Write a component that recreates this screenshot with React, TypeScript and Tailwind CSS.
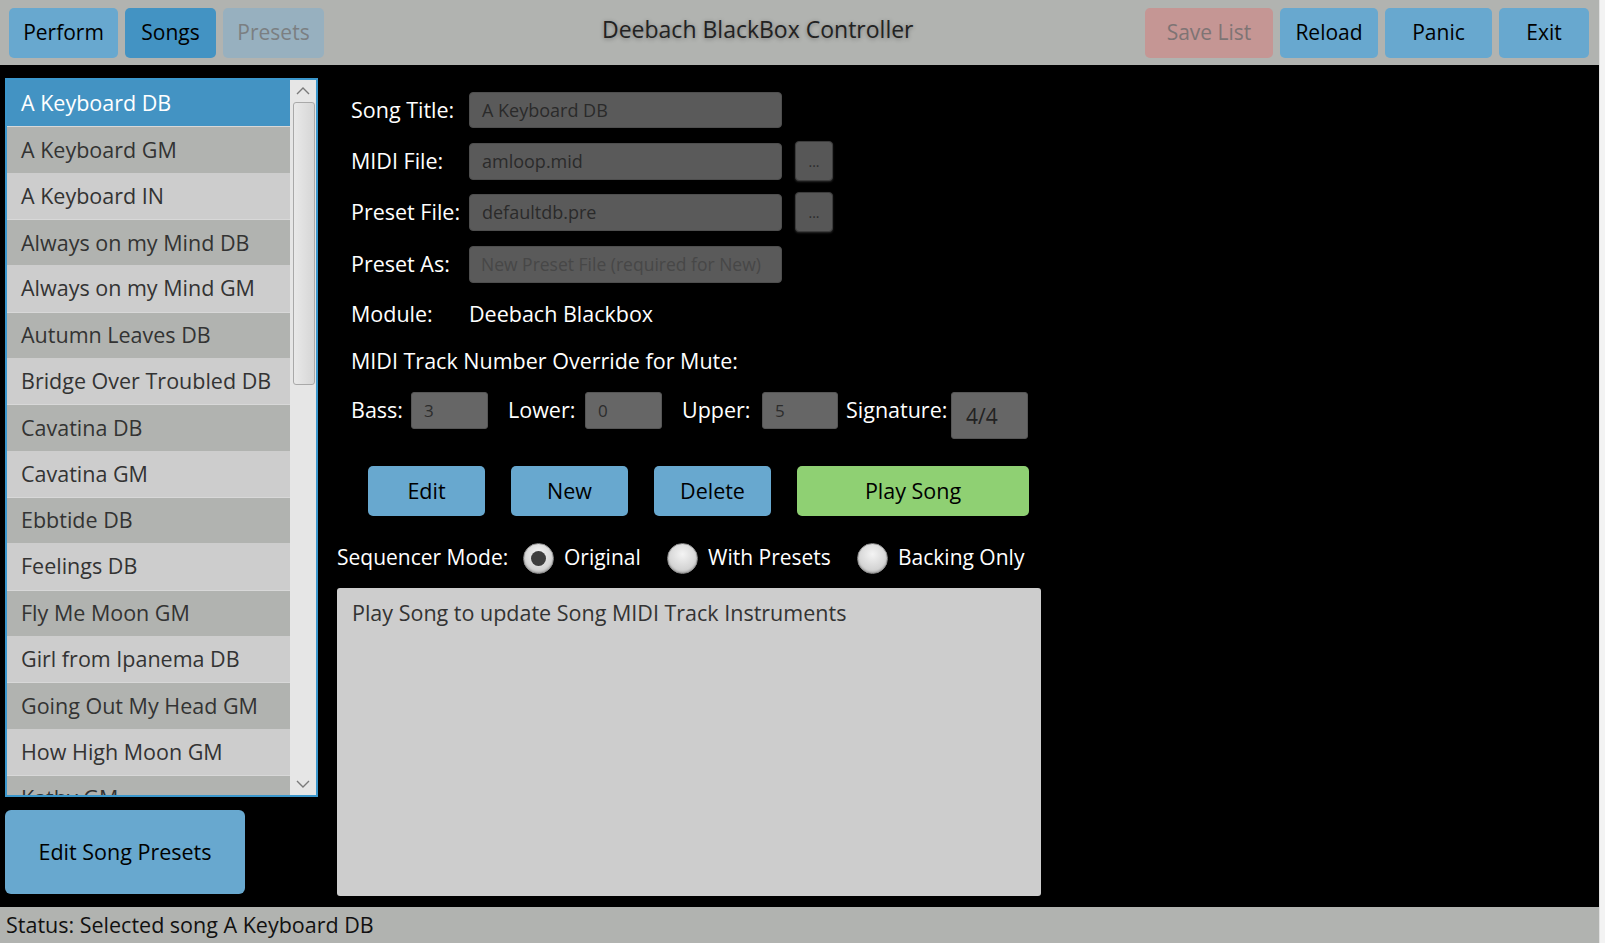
const songs = [
  "A Keyboard DB",
  "A Keyboard GM",
  "A Keyboard IN",
  "Always on my Mind DB",
  "Always on my Mind GM",
  "Autumn Leaves DB",
  "Bridge Over Troubled DB",
  "Cavatina DB",
  "Cavatina GM",
  "Ebbtide DB",
  "Feelings DB",
  "Fly Me Moon GM",
  "Girl from Ipanema DB",
  "Going Out My Head GM",
  "How High Moon GM",
  "Kathy GM",
];

const Radio = ({ checked }: { checked?: boolean }) => (
  <span className="w-[31px] h-[31px] shrink-0 rounded-full border border-[#8c8c8c] bg-[radial-gradient(circle_at_50%_35%,#f4f4f4,#c2c2c2)] shadow-[inset_0_-1px_2px_rgba(0,0,0,0.25)] flex items-center justify-center">
    {checked && <span className="w-[15px] h-[15px] rounded-full bg-[#3e3e3e]" />}
  </span>
);

const TopButton = ({ label, className }: { label: string; className: string }) => (
  <button className={`h-[50px] rounded-[5px] text-[21px] flex items-center justify-center ${className}`}>{label}</button>
);

const App = () => {
  return (
    <div className="flex w-[1605px] h-[943px] overflow-hidden font-['Open_Sans',sans-serif]">
      <div className="w-[1599px] flex flex-col">
        {/* top bar */}
        <div className="h-[65px] bg-[#b1b3b0] flex items-center pl-[9px] pr-[10px]">
          <div className="flex gap-[7px]">
            <TopButton label="Perform" className="w-[109px] bg-[#68a8cf] text-black" />
            <TopButton label="Songs" className="w-[91px] bg-[#4393c3] text-black" />
            <TopButton label="Presets" className="w-[101px] bg-[#97b0bf] text-[#7b7f82]" />
          </div>
          <div className="ml-[278px] pb-[6px] text-[23px] text-[#222] [text-shadow:0_1px_4px_rgba(0,0,0,0.35)]">
            Deebach BlackBox Controller
          </div>
          <div className="ml-auto flex gap-[7px]">
            <TopButton label="Save List" className="w-[128px] bg-[#c59694] text-[#7e7474]" />
            <TopButton label="Reload" className="w-[98px] bg-[#68a8cf] text-black" />
            <TopButton label="Panic" className="w-[107px] bg-[#68a8cf] text-black" />
            <TopButton label="Exit" className="w-[90px] bg-[#68a8cf] text-black" />
          </div>
        </div>

        {/* main */}
        <div className="h-[842px] bg-black flex">
          {/* song list column */}
          <div className="pl-[5px] pt-[13px] w-[318px] flex flex-col">
            <div className="h-[719px] w-[313px] border-2 border-[#3b97cc] flex">
              <div className="w-[283px] overflow-hidden">
                {songs.map((s, i) => (
                  <div
                    key={s}
                    className={`h-[46.33px] flex items-center pl-[14px] text-[21.5px] ${
                      i === 0
                        ? "bg-[#4393c3] text-white"
                        : i % 2 === 1
                        ? "bg-[#b1b3b0] text-[#333] border-t border-[#d8d8d8]"
                        : "bg-[#cdcdcd] text-[#333]"
                    }`}
                  >
                    {s}
                  </div>
                ))}
              </div>
              <div className="w-[26px] bg-[#e6e6e6] flex flex-col">
                <div className="h-[22px] flex items-center justify-center">
                  <svg width="14" height="8" viewBox="0 0 14 8">
                    <polyline points="1,7 7,1 13,7" fill="none" stroke="#7a7a7a" strokeWidth="1.4" />
                  </svg>
                </div>
                <div className="ml-[3px] w-[22px] h-[283px] rounded-[3px] border border-[#a9a9a9] bg-[linear-gradient(to_right,#e9e9e9,#d6d6d6)]" />
                <div className="flex-1" />
                <div className="h-[22px] flex items-center justify-center">
                  <svg width="14" height="8" viewBox="0 0 14 8">
                    <polyline points="1,1 7,7 13,1" fill="none" stroke="#7a7a7a" strokeWidth="1.4" />
                  </svg>
                </div>
              </div>
            </div>
            <button className="mt-[13px] h-[84px] w-[240px] rounded-[6px] bg-[#68a8cf] text-black text-[21.5px]">
              Edit Song Presets
            </button>
          </div>

          {/* form column */}
          <div className="ml-[19px] pt-[26px] flex flex-col text-[21.5px] text-white">
            <div className="pl-[14px] h-[38px] flex items-center">
              <span className="w-[118px]">Song Title:</span>
              <div className="w-[313px] h-[36px] rounded-[4px] bg-[#5a5a5a] border border-[#4e4e4e] flex items-center px-[12px] text-[18px] text-[#2a2a2a]">
                A Keyboard DB
              </div>
            </div>
            <div className="mt-[13px] pl-[14px] h-[38px] flex items-center">
              <span className="w-[118px]">MIDI File:</span>
              <div className="w-[313px] h-[37px] rounded-[4px] bg-[#5a5a5a] border border-[#4e4e4e] flex items-center px-[12px] text-[18px] text-[#2a2a2a]">
                amloop.mid
              </div>
              <button className="ml-[13px] w-[38px] h-[40px] rounded-[4px] bg-[#575757] border border-[#3c3c3c] shadow-[0_1px_2px_rgba(255,255,255,0.15)] text-[#2a2a2a] text-[14px] flex items-end justify-center pb-[8px]">
                ...
              </button>
            </div>
            <div className="mt-[13px] pl-[14px] h-[38px] flex items-center">
              <span className="w-[118px]">Preset File:</span>
              <div className="w-[313px] h-[37px] rounded-[4px] bg-[#5a5a5a] border border-[#4e4e4e] flex items-center px-[12px] text-[18px] text-[#2a2a2a]">
                defaultdb.pre
              </div>
              <button className="ml-[13px] w-[38px] h-[40px] rounded-[4px] bg-[#575757] border border-[#3c3c3c] shadow-[0_1px_2px_rgba(255,255,255,0.15)] text-[#2a2a2a] text-[14px] flex items-end justify-center pb-[8px]">
                ...
              </button>
            </div>
            <div className="mt-[14px] pl-[14px] h-[38px] flex items-center">
              <span className="w-[118px]">Preset As:</span>
              <div className="w-[313px] h-[37px] rounded-[4px] bg-[#5a5a5a] border border-[#4e4e4e] flex items-center px-[11px] text-[17.5px] text-[#474747] whitespace-nowrap overflow-hidden">
                New Preset File (required for New)
              </div>
            </div>
            <div className="mt-[12px] pl-[14px] h-[38px] flex items-center">
              <span className="w-[118px]">Module:</span>
              <span>Deebach Blackbox</span>
            </div>
            <div className="mt-[9px] pl-[14px] h-[38px] flex items-center">MIDI Track Number Override for Mute:</div>
            <div className="mt-[12px] pl-[14px] h-[47px] flex items-start">
              <span className="w-[60px] h-[37px] flex items-center">Bass:</span>
              <div className="w-[77px] h-[37px] rounded-[3px] bg-[#666] border border-[#555] flex items-center px-[12px] text-[17px] text-[#2c2c2c]">3</div>
              <span className="ml-[20px] w-[77px] h-[37px] flex items-center">Lower:</span>
              <div className="w-[77px] h-[37px] rounded-[3px] bg-[#666] border border-[#555] flex items-center px-[12px] text-[17px] text-[#2c2c2c]">0</div>
              <span className="ml-[20px] w-[80px] h-[37px] flex items-center">Upper:</span>
              <div className="w-[76px] h-[37px] rounded-[3px] bg-[#666] border border-[#555] flex items-center px-[12px] text-[17px] text-[#2c2c2c]">5</div>
              <span className="ml-[8px] w-[105px] h-[37px] flex items-center">Signature:</span>
              <div className="w-[77px] h-[47px] rounded-[3px] bg-[#666] border border-[#555] flex items-end pb-[6px] px-[14px] text-[21px] text-[#222]">4/4</div>
            </div>
            <div className="mt-[27px] pl-[31px] h-[50px] flex gap-[26px] text-black">
              <button className="w-[117px] h-[50px] rounded-[5px] bg-[#68a8cf]">Edit</button>
              <button className="w-[117px] h-[50px] rounded-[5px] bg-[#68a8cf]">New</button>
              <button className="w-[117px] h-[50px] rounded-[5px] bg-[#68a8cf]">Delete</button>
              <button className="w-[232px] h-[50px] rounded-[5px] bg-[#8fd073]">Play Song</button>
            </div>
            <div className="mt-[26px] h-[32px] flex items-center whitespace-nowrap text-[21px]">
              <span className="w-[174px] shrink-0">Sequencer Mode:</span>
              <span className="ml-[12px]"><Radio checked /></span>
              <span className="ml-[10px] w-[103px] shrink-0">Original</span>
              <Radio />
              <span className="ml-[10px] w-[149px] shrink-0">With Presets</span>
              <Radio />
              <span className="ml-[10px]">Backing Only</span>
            </div>
            <div className="mt-[14px] w-[704px] h-[308px] rounded-[3px] bg-[#cdcdcd] px-[15px] pt-[9px] text-[#333]">
              Play Song to update Song MIDI Track Instruments
            </div>
          </div>
        </div>

        {/* status */}
        <div className="h-[36px] bg-[#b1b3b0] px-[6px] flex items-center text-[21.5px] text-[#111]">
          Status: Selected song A Keyboard DB
        </div>
      </div>
      <div className="w-[6px] bg-[#f3f3f3] border-l border-[#e0e0e0]" />
    </div>
  );
};

export default App;
